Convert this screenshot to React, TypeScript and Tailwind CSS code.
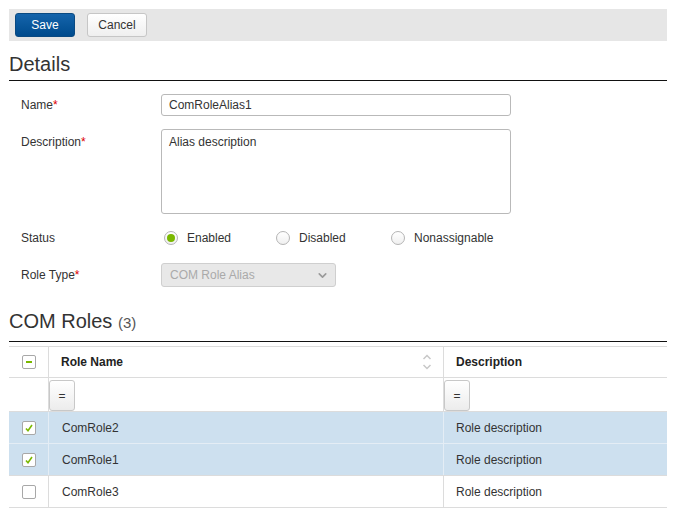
import { ChevronDown } from 'lucide-react';

type Role = { name: string; description: string; selected: boolean };

const roles: Role[] = [
  { name: 'ComRole2', description: 'Role description', selected: true },
  { name: 'ComRole1', description: 'Role description', selected: true },
  { name: 'ComRole3', description: 'Role description', selected: false },
];

function Required() {
  return <span className="text-[#d00]">*</span>;
}

function Radio({ checked, label, width }: { checked?: boolean; label: string; width: string }) {
  return (
    <label className={`flex items-center gap-[9px] ${width}`}>
      <span className="flex h-[14px] w-[14px] items-center justify-center rounded-full border border-[#b4b4b4] bg-gradient-to-b from-white to-[#f0f0f0]">
        {checked ? <span className="h-[8px] w-[8px] rounded-full bg-[#7ab800]" /> : null}
      </span>
      <span>{label}</span>
    </label>
  );
}

function Checkbox({ state }: { state: 'on' | 'off' | 'mixed' }) {
  return (
    <span className="flex h-[14px] w-[14px] items-center justify-center rounded-[2px] border border-[#a8a8a8] bg-white">
      {state === 'mixed' ? <span className="h-[2px] w-[6px] bg-[#7ab800]" /> : null}
      {state === 'on' ? (
        <svg width="10" height="10" viewBox="0 0 10 10">
          <path d="M2 5.5 L4 7.8 L8 2" fill="none" stroke="#7ab800" strokeWidth="1.6" />
        </svg>
      ) : null}
    </span>
  );
}

function FilterButton() {
  return (
    <button
      type="button"
      className="mt-[2px] flex h-[31px] w-[26px] items-center justify-center rounded-[3px] border border-[#c8c8c8] bg-gradient-to-b from-white to-[#ececec] text-[12px] text-[#333]"
    >
      =
    </button>
  );
}

export default function App() {
  return (
    <div className="h-[515px] w-[674px] bg-white pl-[9px] pr-[7px] pt-[9px] font-['Liberation_Sans',Arial,sans-serif] text-[12px] text-[#333]">
      <div className="flex h-[32px] items-center gap-[12px] bg-[#e6e6e6] pl-[6px]">
        <button
          type="button"
          className="h-[24px] w-[60px] rounded-[3px] border border-[#0a4a82] bg-gradient-to-b from-[#1464ab] to-[#004b8d] text-[12px] text-white"
        >
          Save
        </button>
        <button
          type="button"
          className="h-[24px] w-[60px] rounded-[3px] border border-[#c6c6c6] bg-gradient-to-b from-white to-[#efefef] text-[12px] text-[#333]"
        >
          Cancel
        </button>
      </div>

      <h2 className="mt-[11px] border-b border-[#111] pb-[4px] text-[20px] leading-[24px] text-[#333]">Details</h2>

      <div className="mt-[13px] flex items-center">
        <div className="w-[152px] pl-[12px]">
          Name<Required />
        </div>
        <input
          readOnly
          value="ComRoleAlias1"
          className="h-[22px] w-[350px] rounded-[3px] border border-[#b9b9b9] px-[7px] text-[12px] text-[#333] outline-none"
        />
      </div>

      <div className="mt-[13px] flex items-start">
        <div className="w-[152px] pl-[12px] pt-[4px]">
          Description<Required />
        </div>
        <textarea
          readOnly
          value="Alias description"
          className="h-[85px] w-[350px] resize-none rounded-[3px] border border-[#b9b9b9] px-[7px] py-[3px] text-[12px] text-[#333] outline-none"
        />
      </div>

      <div className="mt-[13px] flex h-[22px] items-center">
        <div className="w-[155px] pl-[12px]">Status</div>
        <Radio checked label="Enabled" width="w-[112px]" />
        <Radio label="Disabled" width="w-[115px]" />
        <Radio label="Nonassignable" width="w-[130px]" />
      </div>

      <div className="mt-[14px] flex items-center">
        <div className="w-[152px] pl-[12px]">
          Role Type<Required />
        </div>
        <div className="flex h-[24px] w-[175px] items-center justify-between rounded-[3px] border border-[#cfcfcf] bg-[#e8e8e8] pl-[8px] pr-[6px] text-[#aaa]">
          <span>COM Role Alias</span>
          <ChevronDown size={13} strokeWidth={3} className="text-[#9a9a9a]" />
        </div>
      </div>

      <h2 className="mt-[22px] border-b border-[#111] pb-[6px] text-[20px] leading-[24px] text-[#333]">
        COM Roles <span className="text-[15px] text-[#555]">(3)</span>
      </h2>

      <div className="mt-[4px] border-t border-[#dcdcdc]">
        <div className="flex h-[31px] border-b border-[#dcdcdc]">
          <div className="flex w-[40px] items-center justify-center border-r border-[#dcdcdc] pl-[1px]">
            <Checkbox state="mixed" />
          </div>
          <div className="flex w-[395px] items-center justify-between border-r border-[#dcdcdc] pl-[12px] pr-[10px] font-bold text-[#222]">
            <span>Role Name</span>
            <svg width="12" height="20" viewBox="0 0 12 20">
              <path d="M2.5 7 L6 3.5 L9.5 7" fill="none" stroke="#c8c8c8" strokeWidth="1.5" />
              <path d="M2.5 13 L6 16.5 L9.5 13" fill="none" stroke="#c8c8c8" strokeWidth="1.5" />
            </svg>
          </div>
          <div className="flex flex-1 items-center pl-[12px] font-bold text-[#222]">Description</div>
        </div>

        <div className="flex h-[34px] border-b border-[#dcdcdc]">
          <div className="w-[40px] border-r border-[#dcdcdc]" />
          <div className="w-[395px] border-r border-[#dcdcdc]">
            <FilterButton />
          </div>
          <div className="flex-1">
            <FilterButton />
          </div>
        </div>

        {roles.map((role, index) => (
          <div
            key={role.name}
            className={`flex h-[32px] border-b ${
              role.selected ? 'bg-[#cde0ef]' : 'bg-white'
            } ${role.selected && roles[index + 1]?.selected ? 'border-[#e4edf5]' : 'border-[#dcdcdc]'}`}
          >
            <div className={`flex w-[40px] items-center justify-center border-r pl-[1px] ${role.selected ? 'border-[#e4edf5]' : 'border-[#dcdcdc]'}`}>
              <Checkbox state={role.selected ? 'on' : 'off'} />
            </div>
            <div className={`flex w-[395px] items-center border-r pl-[13px] ${role.selected ? 'border-[#e4edf5]' : 'border-[#dcdcdc]'}`}>
              {role.name}
            </div>
            <div className="flex flex-1 items-center pl-[12px]">{role.description}</div>
          </div>
        ))}
      </div>
    </div>
  );
}
